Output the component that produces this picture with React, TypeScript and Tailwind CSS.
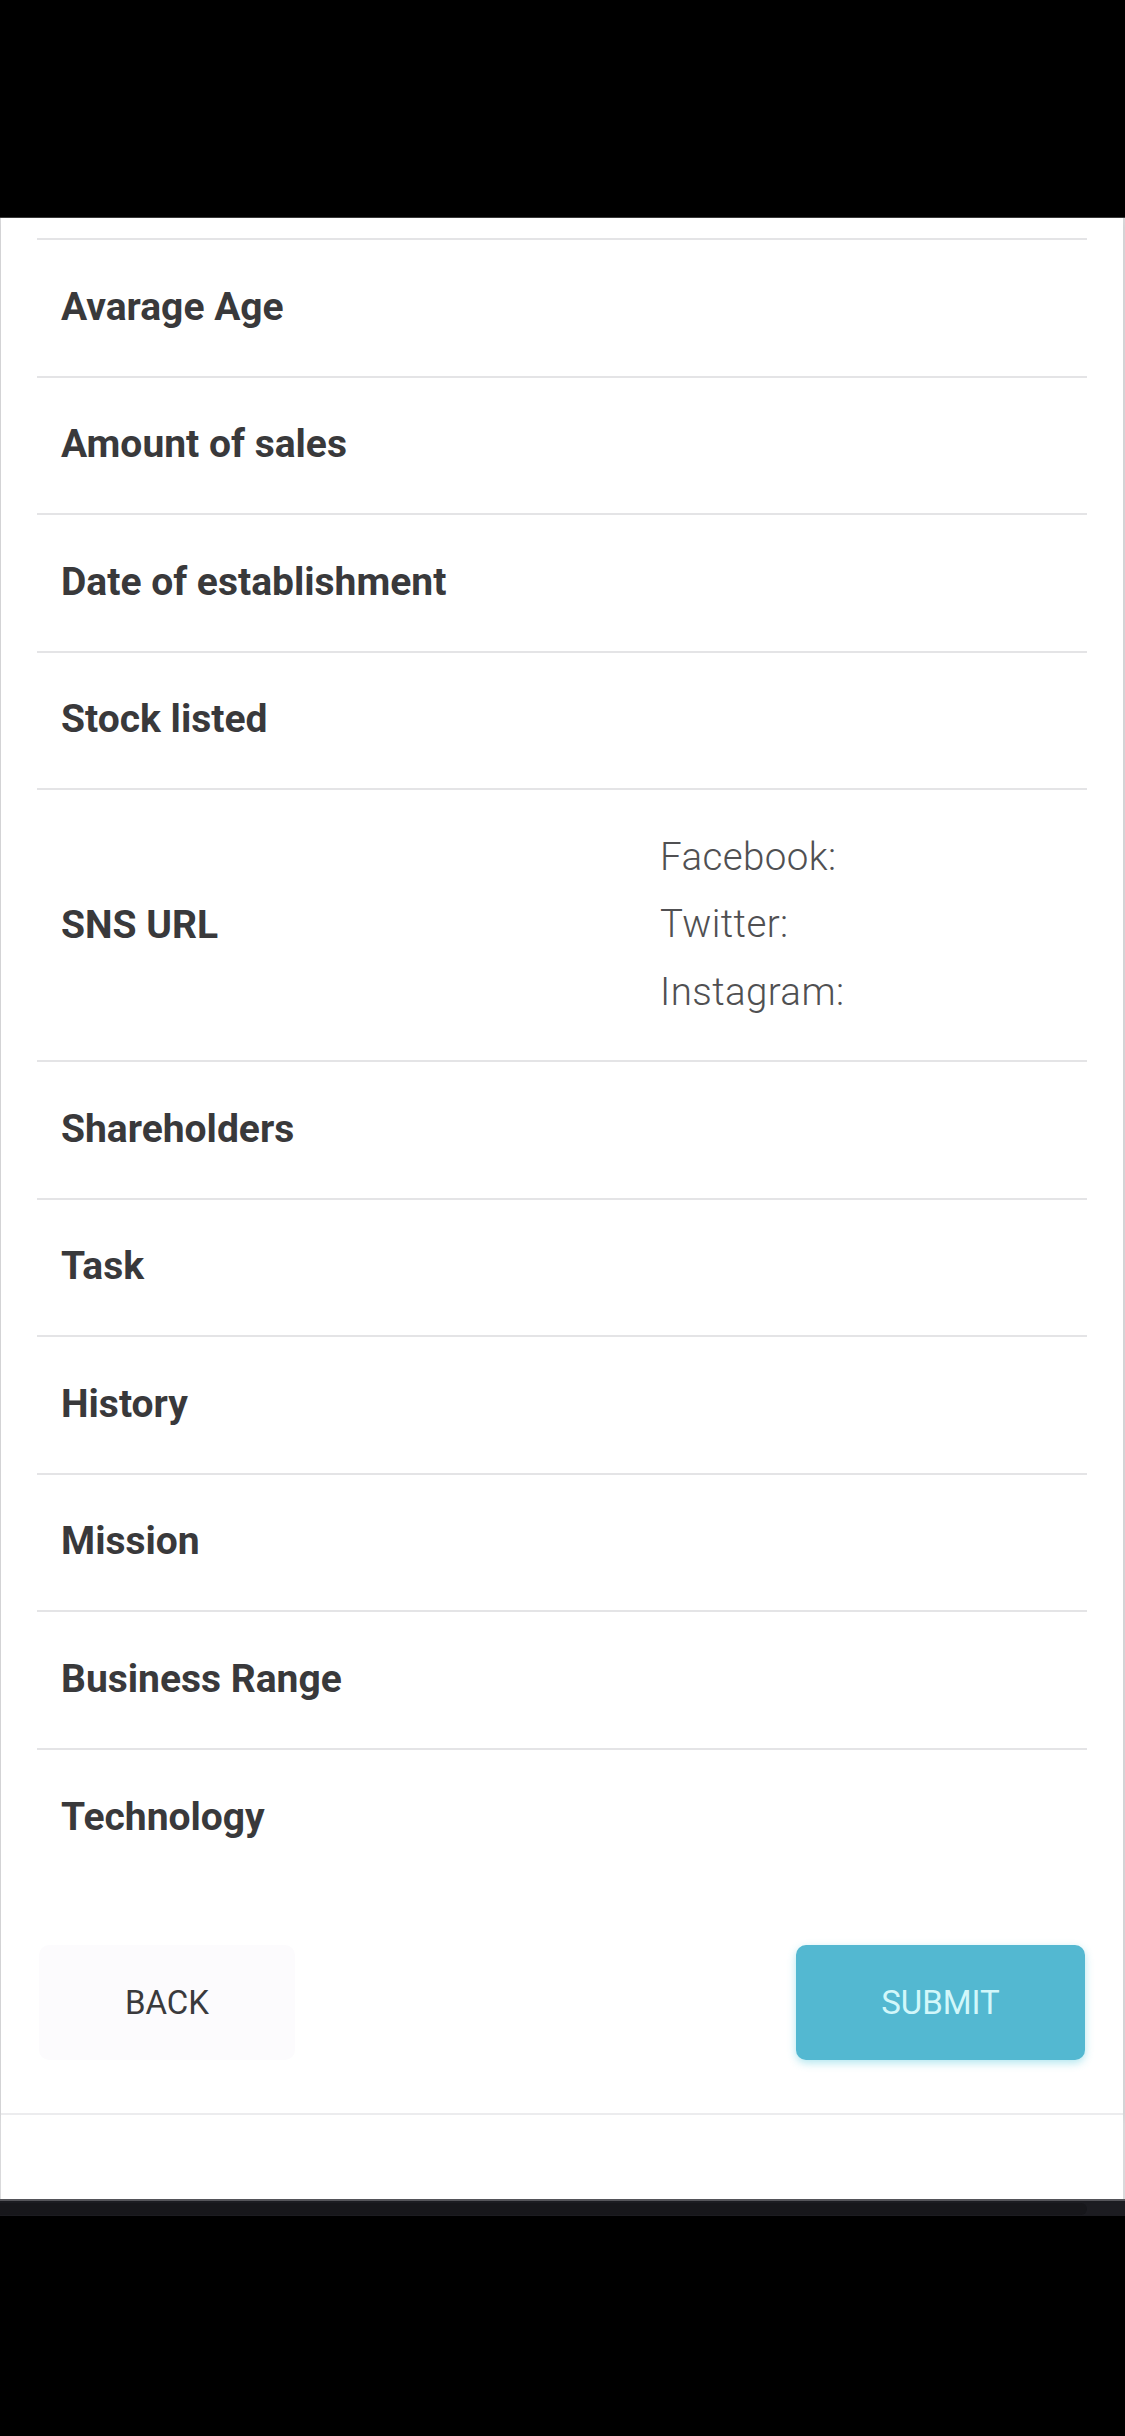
import React from "react";

const rowsA = ["Avarage Age", "Amount of sales", "Date of establishment", "Stock listed"];
const rowsB = ["Shareholders", "Task", "History", "Mission", "Business Range", "Technology"];

function Row({ label, last }: { label: string; last?: boolean }) {
  return (
    <div className={`flex h-[137.5px] items-center pl-[24px] pb-[2px] ${last ? "" : "border-b-2 border-[#e4e4e6]"}`}>
      <span className="text-[39px] font-bold text-[#39393b]">{label}</span>
    </div>
  );
}

export default function App() {
  return (
    <div className="w-[1125px] h-[2436px] bg-black flex flex-col" style={{ fontFamily: "Roboto, 'Noto Sans', sans-serif" }}>
      <div className="h-[218px] shrink-0 bg-black border-b border-[#3a3a3a]" />
      <div className="h-[1981px] shrink-0 bg-white border-l border-r-2 border-[#d9d9db] flex flex-col">
        <div className="bg-white border-b-2 border-[#ececee] shadow-[0_4px_8px_rgba(0,0,0,0.06)] pt-[20px] pb-[53px]">
          <div className="mx-[36px] border-t-2 border-[#e4e4e6]">
            {rowsA.map((l) => (
              <Row key={l} label={l} />
            ))}
            <div className="flex h-[272px] items-center border-b-2 border-[#e4e4e6]">
              <div className="w-[623px] pl-[24px]">
                <span className="text-[39px] font-bold text-[#39393b]">SNS URL</span>
              </div>
              <div className="flex flex-col text-[38.5px] font-light tracking-[0.4px] leading-[67.5px] text-[#505052] pb-[2px]">
                <span>Facebook:</span>
                <span>Twitter:</span>
                <span>Instagram:</span>
              </div>
            </div>
            {rowsB.map((l, i) => (
              <Row key={l} label={l} last={i === rowsB.length - 1} />
            ))}
          </div>
          <div className="mx-[38px] mt-[58px] flex justify-between">
            <button className="h-[115px] w-[256px] rounded-[10px] bg-[#fcfbfd] text-[33px] text-[#3a3a3c]">
              BACK
            </button>
            <button className="h-[115px] w-[289px] rounded-[10px] bg-[#53b8d1] text-[33px] text-[#d2f7fa] shadow-[0_3px_8px_rgba(83,200,220,0.45)]">
              SUBMIT
            </button>
          </div>
        </div>
        <div className="flex-1 bg-white" />
      </div>
      <div className="h-[17px] shrink-0 bg-[#1c1c21] border-t-2 border-[#55555a] flex items-center">
        <div className="h-[12px] w-[1087px] rounded-r-md bg-[#17171b]" />
      </div>
      <div className="flex-1 bg-black" />
    </div>
  );
}
